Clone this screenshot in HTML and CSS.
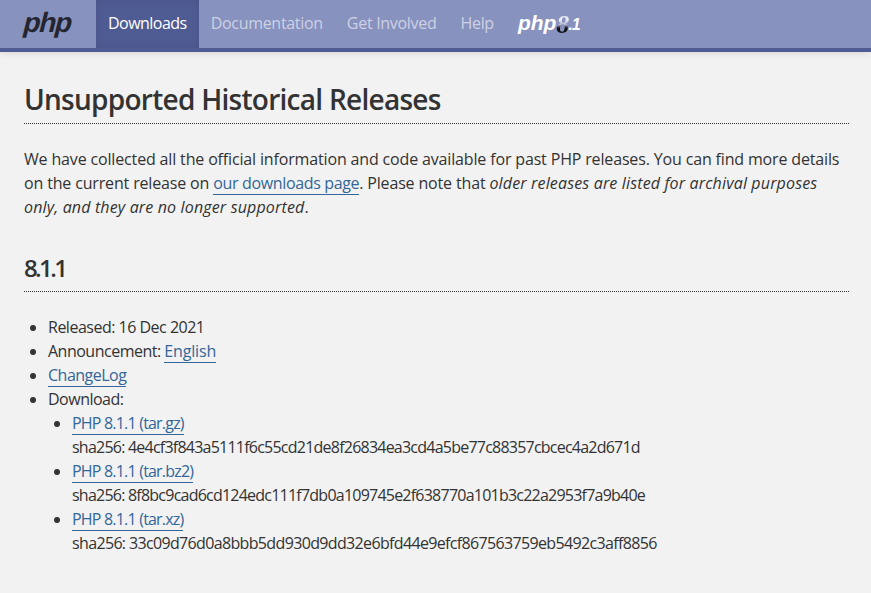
FILE: index.html
```html
<!DOCTYPE html>
<html lang="en"><head><meta charset="utf-8"><title>PHP: Releases</title><link rel="stylesheet" href="styles.css"></head>
<body>
<header class="navbar">
  <a class="logo" href="#"><span class="logo-mark">php</span></a>
  <nav class="menu">
    <a class="tab active" href="#">Downloads</a>
    <a class="tab" href="#">Documentation</a>
    <a class="tab" href="#">Get Involved</a>
    <a class="tab" href="#">Help</a>
  </nav>
  <a class="version" href="#"><span class="v-php">php</span><span class="v-eight">8</span><span class="v-num">.1</span></a>
</header>
<main class="content">
  <h1>Unsupported Historical Releases</h1>
  <p>We have collected all the official information and code available for past PHP releases. You can find more details on the current release on <a class="page-link" href="#">our downloads page</a>. Please note that <em>older releases are listed for archival purposes only, and they are no longer supported</em>.</p>
  <h2>8.1.1</h2>
  <ul class="facts">
    <li>Released: 16 Dec 2021</li>
    <li>Announcement: <a class="lang" href="#">English</a></li>
    <li><a href="#">ChangeLog</a></li>
    <li>Download:
      <ul class="files">
        <li><a class="dl" href="#">PHP 8.1.1 (tar.gz)</a><br><span class="hash">sha256: 4e4cf3f843a5111f6c55cd21de8f26834ea3cd4a5be77c88357cbcec4a2d671d</span></li>
        <li><a class="dl" href="#">PHP 8.1.1 (tar.bz2)</a><br><span class="hash">sha256: 8f8bc9cad6cd124edc111f7db0a109745e2f638770a101b3c22a2953f7a9b40e</span></li>
        <li><a class="dl" href="#">PHP 8.1.1 (tar.xz)</a><br><span class="hash hash-wide">sha256: 33c09d76d0a8bbb5dd930d9dd32e6bfd44e9efcf867563759eb5492c3aff8856</span></li>
      </ul>
    </li>
  </ul>
</main>
</body></html>
```
FILE: styles.css
```css
* { box-sizing: border-box; }
html, body { margin: 0; padding: 0; }
body {
  background: #f2f2f2;
  color: #333;
  font-family: "Open Sans", sans-serif;
  font-size: 16px;
  line-height: 24px;
  letter-spacing: -0.155px;
  height: 593px;
  overflow: hidden;
}
.navbar {
  display: flex;
  align-items: stretch;
  height: 52px;
  background: #8892bf;
  border-bottom: 4px solid #4f5b93;
  box-shadow: 0 0 8px rgba(0,0,0,.15);
}
.logo {
  width: 96px;
  padding-left: 24px;
  color: #24262f;
  text-decoration: none;
  font-family: "Liberation Sans", sans-serif;
  font-weight: 700;
  font-size: 28px;
  line-height: 46px;
  letter-spacing: -1.3px;
}
.logo-mark { display: inline-block; transform: skewX(-14deg); }
.menu { display: flex; }
.tab {
  padding: 0 12px;
  line-height: 46px;
  color: #cdd1e4;
  text-decoration: none;
  letter-spacing: -0.3px;
}
.tab.active {
  background: #4f5b93;
  box-shadow: inset 0 0 8px rgba(0,0,0,.08);
  color: #fff;
  letter-spacing: -0.53px;
}
.version {
  display: flex;
  align-items: baseline;
  margin-left: 12px;
  color: #fff;
  text-decoration: none;
  font-family: "Liberation Sans", sans-serif;
  font-weight: 700;
  font-style: italic;
  line-height: 45px;
}
.v-php { font-size: 21px; letter-spacing: 0; }
.v-eight {
  margin: 0 -1px 0 0;
  font-family: "Liberation Serif", serif;
  font-size: 26px;
  font-weight: 700;
  line-height: 26px;
  background: linear-gradient(#e6e8f2 30%, #b8bcd4 48%, #0d0d12 62%);
  -webkit-background-clip: text;
  background-clip: text;
  color: transparent;
  transform: translateY(3px);
}
.v-num { font-size: 16px; letter-spacing: -1px; }
.content { padding: 23px 22px 0 24px; }
h1 {
  margin: 0 0 23px;
  height: 49px;
  font-size: 28px;
  line-height: 49px;
  font-weight: 600;
  letter-spacing: -0.73px;
  border-bottom: 1px dotted #333;
}
p { margin: 0 0 24px; }
em { letter-spacing: 0.15px; }
h2 {
  margin: 0 0 23px;
  height: 49px;
  font-size: 24px;
  line-height: 49px;
  font-weight: 600;
  letter-spacing: -2.6px;
  border-bottom: 1px dotted #333;
}
ul { margin: 0; padding-left: 24px; list-style: disc; }
.facts { letter-spacing: -0.5px; }
a {
  color: #369;
  text-decoration: none;
  border-bottom: 1px solid #369;
}
.content a.page-link { letter-spacing: -0.35px; }
.content a.lang { letter-spacing: -0.155px; }
.content a.dl { letter-spacing: -0.8px; }
.hash { letter-spacing: -0.77px; }
.hash-wide { letter-spacing: -0.65px; }
.navbar a { border-bottom: 0; }
```
